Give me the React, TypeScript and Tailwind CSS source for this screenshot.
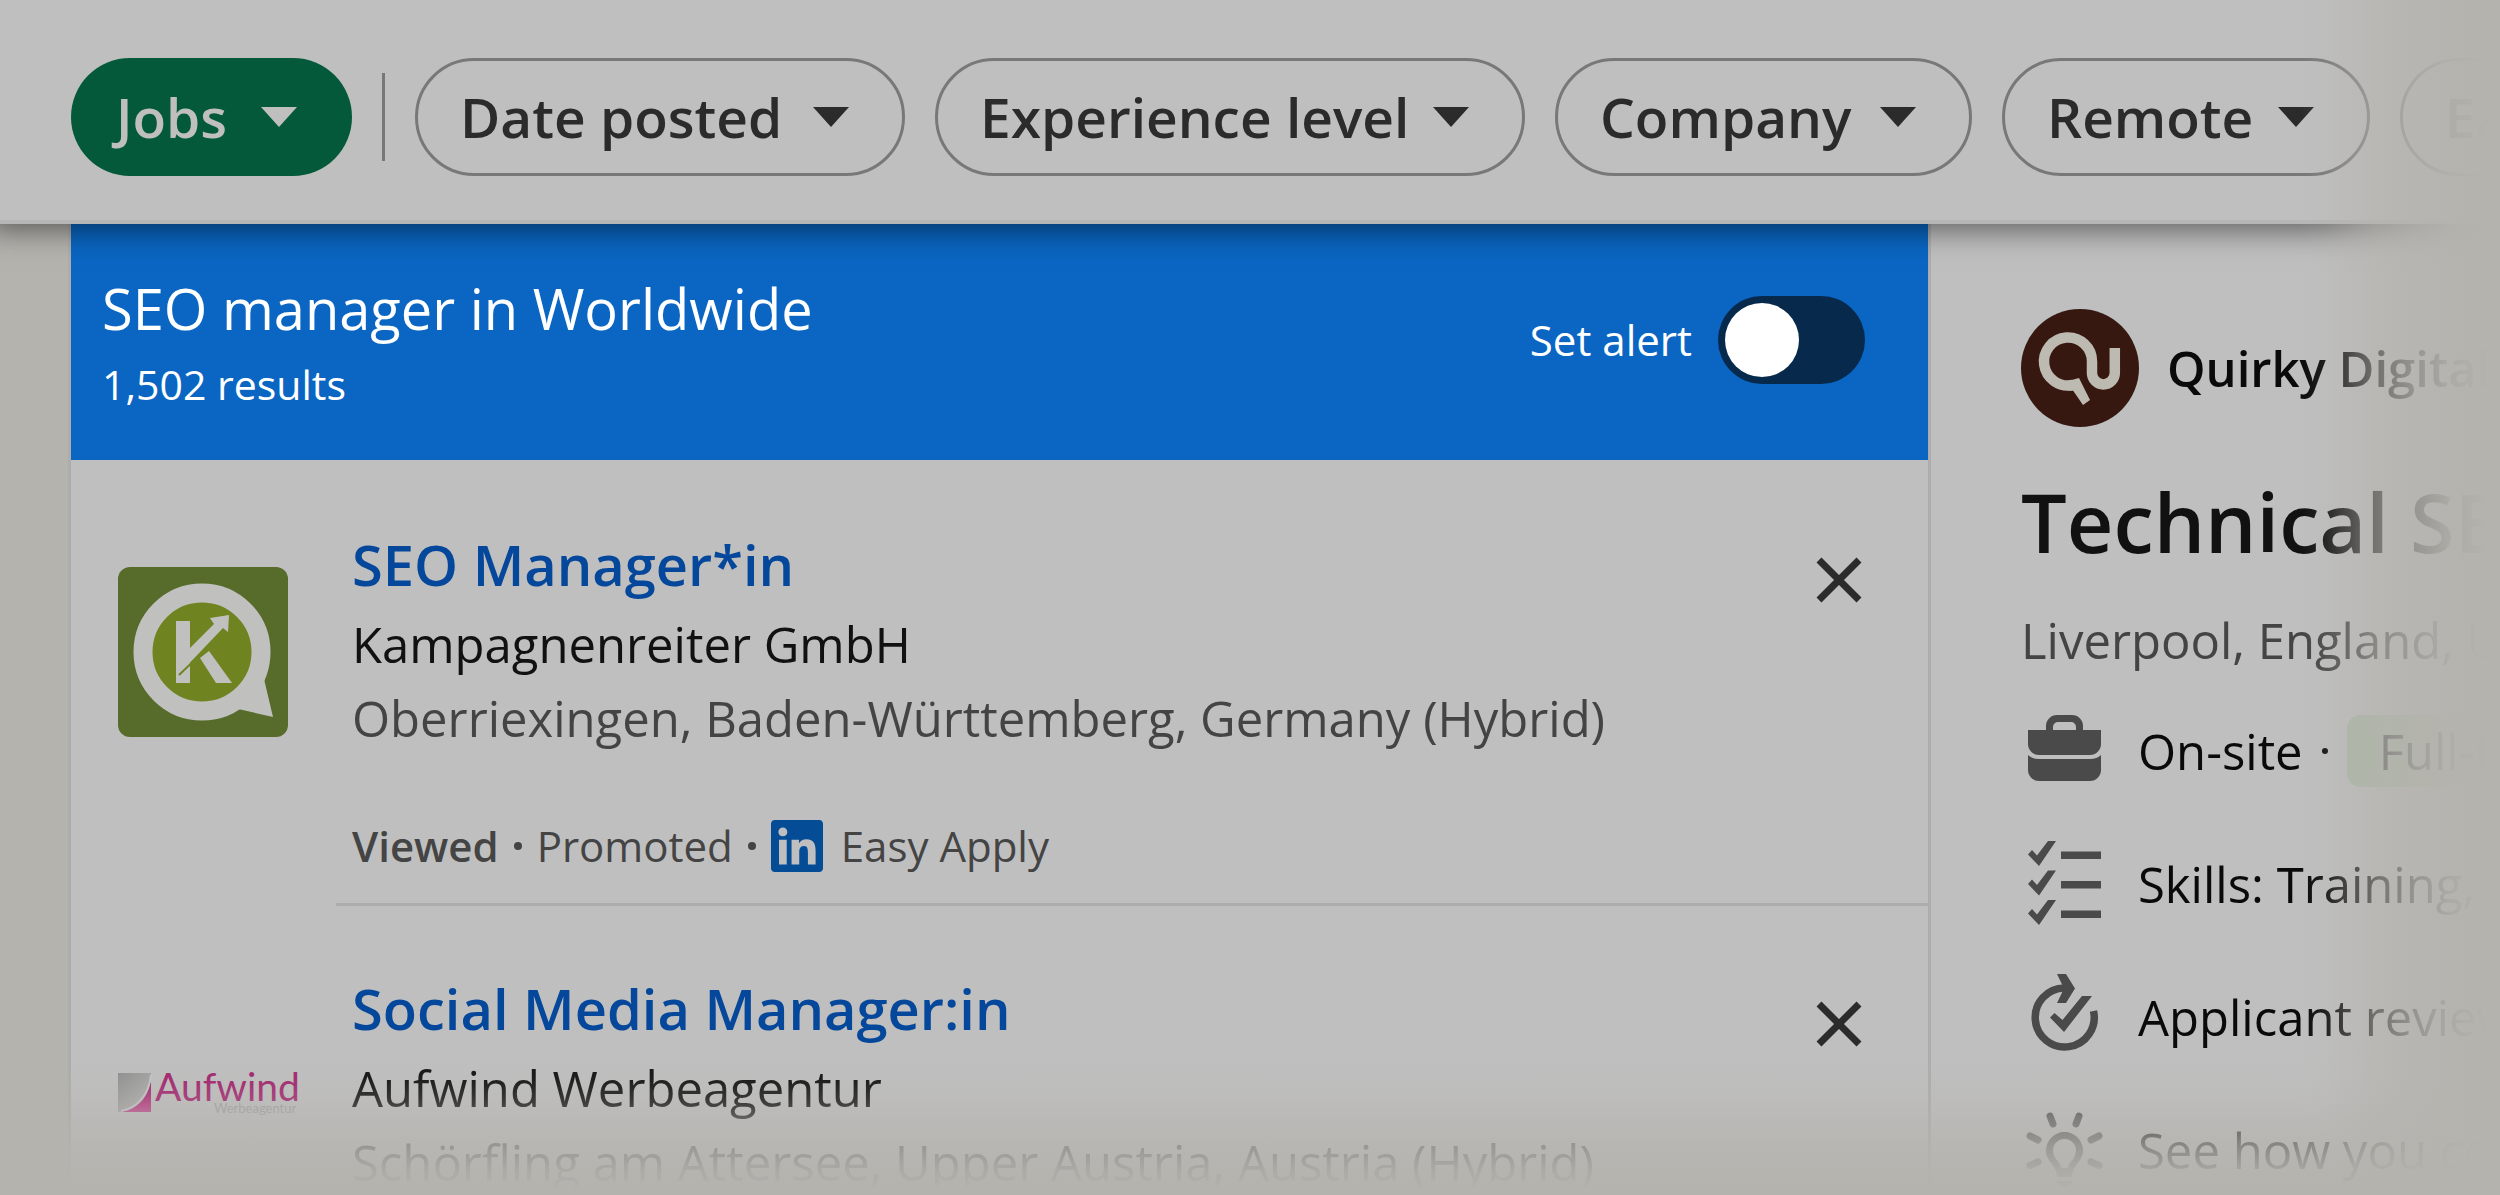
import React, { useState } from 'react';
import { FaLinkedin } from 'react-icons/fa';

interface Job {
  title: string;
  company: string;
  location: string;
  logo: React.ReactNode;
}

const CaretDown: React.FC = () => (
  <svg viewBox="0 0 36 20" className="w-9 h-5 shrink-0" fill="currentColor" aria-hidden="true">
    <path d="M0 0h36L18 20z" />
  </svg>
);

const KampagnenreiterLogo: React.FC = () => (
  <svg viewBox="0 0 170 170" className="w-[170px] h-[170px]" aria-hidden="true">
    <rect width="170" height="170" rx="12" fill="#576b2b" />
    <path d="M120 142 155 150 146 112z" fill="#c0c0bf" />
    <circle cx="84" cy="85" r="59" fill="#6f8421" stroke="#c0c0bf" strokeWidth="19" />
    <rect x="58" y="54" width="14" height="62" fill="#c0c0bf" />
    <path d="M58 108V94L72 81 96 57 92 51 111 48 110 65 105 61 63 105z" fill="#c0c0bf" />
    <path d="M61 108 84 86" stroke="#6f8421" strokeWidth="2" />
    <path d="M82 91 91 84 114 116H98z" fill="#c0c0bf" />
  </svg>
);

const AufwindLogo: React.FC = () => (
  <svg viewBox="0 0 182 170" className="w-[182px] h-[170px]" aria-hidden="true">
    <defs>
      <linearGradient id="aufwind-grey" x1="0" y1="0" x2="1" y2="1">
        <stop offset="0" stopColor="#8f8f8f" />
        <stop offset="1" stopColor="#b4b4b4" />
      </linearGradient>
      <linearGradient id="aufwind-pink" x1="0" y1="0" x2="0" y2="1">
        <stop offset="0" stopColor="#9c1c66" />
        <stop offset="1" stopColor="#c03f88" />
      </linearGradient>
    </defs>
    <rect y="62" width="33" height="39" fill="url(#aufwind-grey)" />
    <path d="M33 68v33H3C19 99 31 86 33 68z" fill="url(#aufwind-pink)" />
    <path d="M33 64C31 84 19 97 3 100" fill="none" stroke="#c4c4c4" strokeWidth="2" />
    <text x="37" y="90" fontSize="39" fontFamily="Lato, sans-serif" fill="#a3236e">Aufwind</text>
    <text x="96" y="102" fontSize="13" fontFamily="Lato, sans-serif" fill="#a0a0a0">Werbeagentur</text>
  </svg>
);

const QuirkyLogo: React.FC = () => (
  <svg viewBox="0 0 118 118" className="w-[118px] h-[118px] shrink-0" aria-hidden="true">
    <circle cx="59" cy="59" r="59" fill="#371811" />
    <path
      d="M52 76A24 24 0 1 1 71 52.500V64a11.400 11.400 0 0 0 22.800 0V39"
      fill="none"
      stroke="#bdbab2"
      strokeWidth="10.500"
    />
    <path d="M58 69 69 91 62 96 52 81.500H47V72z" fill="#bdbab2" />
  </svg>
);

const BriefcaseIcon: React.FC = () => (
  <svg viewBox="0 0 76 84" className="w-[76px] h-[84px] shrink-0" fill="#4a4a4a" aria-hidden="true">
    <path
      fillRule="evenodd"
      d="M20 21v-4A11 11 0 0 1 31 6h15a11 11 0 0 1 11 11v4h18v14a11 11 0 0 1-11 11H13A11 11 0 0 1 2 35V21zm7 0h23v-3a5 5 0 0 0-5-5H32a5 5 0 0 0-5 5z"
    />
    <path d="M2 46q4 4 11 4h51q7 0 11-4v15a11 11 0 0 1-11 11H13A11 11 0 0 1 2 61z" />
  </svg>
);

const SkillsIcon: React.FC = () => (
  <svg viewBox="0 0 76 84" className="w-[76px] h-[84px] shrink-0 overflow-visible" fill="#4a4a4a" aria-hidden="true">
    <path d="M2 12.500 6 8l5 5.500L22-1h8L13 24zM35 9.500h40V17H35z" />
    <path d="M2 42l4-4.500 5 5.500 11-14.500h8l-17 25zM35 39h40v7.500H35z" />
    <path d="M2 71.500 6 67l5 5.500L22 58h8L13 83zM35 68.500h40V76H35z" />
  </svg>
);

const ReviewIcon: React.FC = () => (
  <svg viewBox="0 0 76 84" className="w-[76px] h-[84px] shrink-0 overflow-visible" fill="none" aria-hidden="true">
    <path d="M42 13h-3.500A29.500 29.500 0 1 0 67.500 36" stroke="#4a4a4a" strokeWidth="7.500" />
    <path d="M31-1h9l9 14.500L40 28h-9l7-14.500z" fill="#4a4a4a" />
    <path d="M24 42.500 28.500 38l8 7L56 21h10L38 57z" fill="#4a4a4a" />
  </svg>
);

const BulbIcon: React.FC = () => (
  <svg viewBox="0 0 76 84" className="w-[76px] h-[84px] shrink-0 overflow-visible" fill="#4a4a4a" aria-hidden="true">
    <path
      d="M24 8l3 8M53 8l-3 8M4 28l8 4M73 28l-8 4M4 57.500l8-3.500M73 57.500L65 54"
      stroke="#4a4a4a"
      strokeWidth="7"
      strokeLinecap="round"
    />
    <path
      fillRule="evenodd"
      d="M20 42.500a18.500 18.500 0 0 1 37 0C57 54 46 57 46 69H31C31 57 20 54 20 42.500zm7 0C27 50 33 53 35.500 60h6C44 53 50 50 50 42.500a11.500 11.500 0 0 0-23 0z"
    />
    <path d="M31 73h15q-1 6-7.500 6t-7.500-6z" />
  </svg>
);

const filters = [
  { label: 'Date posted', width: 'w-[490px]' },
  { label: 'Experience level', width: 'w-[590px]' },
  { label: 'Company', width: 'w-[417px]' },
  { label: 'Remote', width: 'w-[368px]' },
  { label: 'Easy Apply', width: 'w-[460px]' },
];

const jobs: Job[] = [
  {
    title: 'SEO Manager*in',
    company: 'Kampagnenreiter GmbH',
    location: 'Oberriexingen, Baden-Württemberg, Germany (Hybrid)',
    logo: <KampagnenreiterLogo />,
  },
  {
    title: 'Social Media Manager:in',
    company: 'Aufwind Werbeagentur',
    location: 'Schörfling am Attersee, Upper Austria, Austria (Hybrid)',
    logo: <AufwindLogo />,
  },
];

const FilterBar: React.FC = () => (
  <header className="relative z-10 h-[224px] shrink-0 bg-[#bfbfbf] border-b-4 border-[#b6b6b6] shadow-[0_-6px_28px_12px_rgba(0,0,0,0.5)]">
    <nav className="flex items-center gap-[30px] pt-[58px] pl-[71px] text-[55px] leading-[72px] font-semibold">
      <button className="flex items-center justify-between w-[281px] h-[118px] shrink-0 rounded-full bg-[#05593b] pl-[45px] pr-[55px] text-[#bfbfbf]">
        Jobs
        <CaretDown />
      </button>
      <div className="w-[3px] h-[88px] shrink-0 bg-[#787878]" />
      {filters.map((filter) => (
        <button
          key={filter.label}
          className={`flex items-center justify-between h-[118px] shrink-0 whitespace-nowrap rounded-full border-[3px] border-[#787878] pl-[42px] pr-[53px] text-[#2b2b2b] ${filter.width}`}
        >
          {filter.label}
          <CaretDown />
        </button>
      ))}
    </nav>
  </header>
);

const JobCard: React.FC<{ job: Job; onDismiss: () => void }> = ({ job, onDismiss }) => (
  <li className="flex pl-[47px]">
    <div className="w-[170px] shrink-0 pt-[105px]">{job.logo}</div>
    <div className="flex flex-1 justify-between ml-12 pl-4 pt-[66px] pb-[29px] border-b-[3px] border-[#adadad]">
      <div className="whitespace-nowrap">
        <a href="#job" className="block text-[56px] leading-[72px] font-semibold text-[#04479b]">
          {job.title}
        </a>
        <p className="mt-3 text-[49px] leading-[64px] text-[#111111]">{job.company}</p>
        <p className="mt-[10px] text-[49px] leading-[64px] text-[#444444]">{job.location}</p>
        <div className="flex items-center h-14 mt-[68px] text-[42px] leading-[56px] text-[#444444]">
          <span className="font-semibold">Viewed</span>
          <span className="mx-[15px] w-2 h-2 rounded-full bg-[#444444]" />
          <span>Promoted</span>
          <span className="mx-[15px] w-2 h-2 rounded-full bg-[#444444]" />
          <FaLinkedin className="w-[52px] h-[60px] text-[#044c96]" />
          <span className="ml-[18px]">Easy Apply</span>
        </div>
      </div>
      <button onClick={onDismiss} aria-label="Dismiss job" className="self-start mt-[30px] mr-[67px]">
        <svg viewBox="0 0 44 44" className="w-11 h-11 overflow-visible" stroke="#2b2b2b" strokeWidth="7" aria-hidden="true">
          <path d="M2 2l40 40M42 2L2 42" />
        </svg>
      </button>
    </div>
  </li>
);

const JobList: React.FC = () => {
  const [alertOn, setAlertOn] = useState(false);
  const [dismissed, setDismissed] = useState<string[]>([]);

  return (
    <section className="flex-1 min-w-0 border-x-[3px] border-[#adadac] bg-[#bfbfbf]">
      <div className="flex items-center justify-between h-[236px] bg-[#0a66c2] pl-[31px] pr-[63px] text-white">
        <div>
          <h1 className="text-[56px] leading-[72px]">SEO manager in Worldwide</h1>
          <p className="mt-3 text-[41px] leading-[56px]">1,502 results</p>
        </div>
        <label className="flex items-center gap-[26px] mb-1 text-[42px] leading-[56px]">
          Set alert
          <input
            type="checkbox"
            role="switch"
            checked={alertOn}
            onChange={() => setAlertOn(!alertOn)}
            className="appearance-none flex items-center w-[147px] h-[88px] rounded-full bg-[#06294c] px-[7px] before:block before:w-[74px] before:h-[74px] before:rounded-full before:bg-white checked:justify-end"
          />
        </label>
      </div>
      <ul className="pt-[2px]">
        {jobs
          .filter((job) => !dismissed.includes(job.title))
          .map((job) => (
            <JobCard key={job.title} job={job} onDismiss={() => setDismissed([...dismissed, job.title])} />
          ))}
      </ul>
    </section>
  );
};

const JobDetail: React.FC = () => (
  <section className="w-[569px] shrink-0 overflow-hidden whitespace-nowrap bg-[#bfbfbf] pt-[85px] pl-[90px]">
    <div className="flex items-center gap-7">
      <QuirkyLogo />
      <span className="text-[49px] leading-[64px] font-semibold text-[#0a0a0a]">Quirky Digital</span>
    </div>
    <h2 className="mt-[47px] text-[81px] leading-[96px] font-semibold text-[#111111]">Technical SEO</h2>
    <p className="mt-[38px] text-[49px] leading-[64px] text-[#444444]">Liverpool, England, United Kingdom</p>
    <ul className="flex flex-col gap-[61px] mt-[43px] text-[49px] leading-[72px] text-[#0a0a0a]">
      <li className="flex items-center h-[72px] gap-9 pl-[5px]">
        <BriefcaseIcon />
        <div className="flex items-center">
          On-site
          <span className="mx-[19px] w-[6px] h-[6px] rounded-full bg-[#0a0a0a]" />
          <span className="rounded-[14px] bg-[#a9b8a5] px-8 text-[#444444]">Full-time</span>
        </div>
      </li>
      <li className="flex items-center h-[72px] gap-9 pl-[5px]">
        <SkillsIcon />
        Skills: Training, Content
      </li>
      <li className="flex items-center h-[72px] gap-9 pl-[5px]">
        <ReviewIcon />
        Applicant review time
      </li>
      <li className="flex items-center h-[72px] gap-9 pl-[5px]">
        <BulbIcon />
        See how you compare
      </li>
    </ul>
  </section>
);

const App: React.FC = () => (
  <div className="relative flex flex-col h-screen overflow-hidden bg-[#b5b3ae] font-['Open_Sans','Noto_Sans',sans-serif]">
    <FilterBar />
    <main className="flex flex-1 min-h-0 pl-[68px]">
      <JobList />
      <JobDetail />
    </main>

    {/* Edge fades */}
    <div className="pointer-events-none absolute z-20 inset-y-0 right-0 w-[200px] bg-[linear-gradient(to_right,#b5b3ae00_0%,#b5b3ae1f_12%,#b5b3ae4d_21%,#b5b3ae99_37%,#b5b3aecc_55%,#b5b3aef2_75%,#b5b3ae_95%)]" />
    <div className="pointer-events-none absolute z-20 inset-x-0 bottom-0 h-[145px] bg-[linear-gradient(to_bottom,#b5b3ae00_0%,#b5b3ae14_20%,#b5b3ae40_35%,#b5b3ae80_48%,#b5b3aebf_66%,#b5b3aeeb_83%,#b5b3ae_97%)]" />
  </div>
);

export default App;
